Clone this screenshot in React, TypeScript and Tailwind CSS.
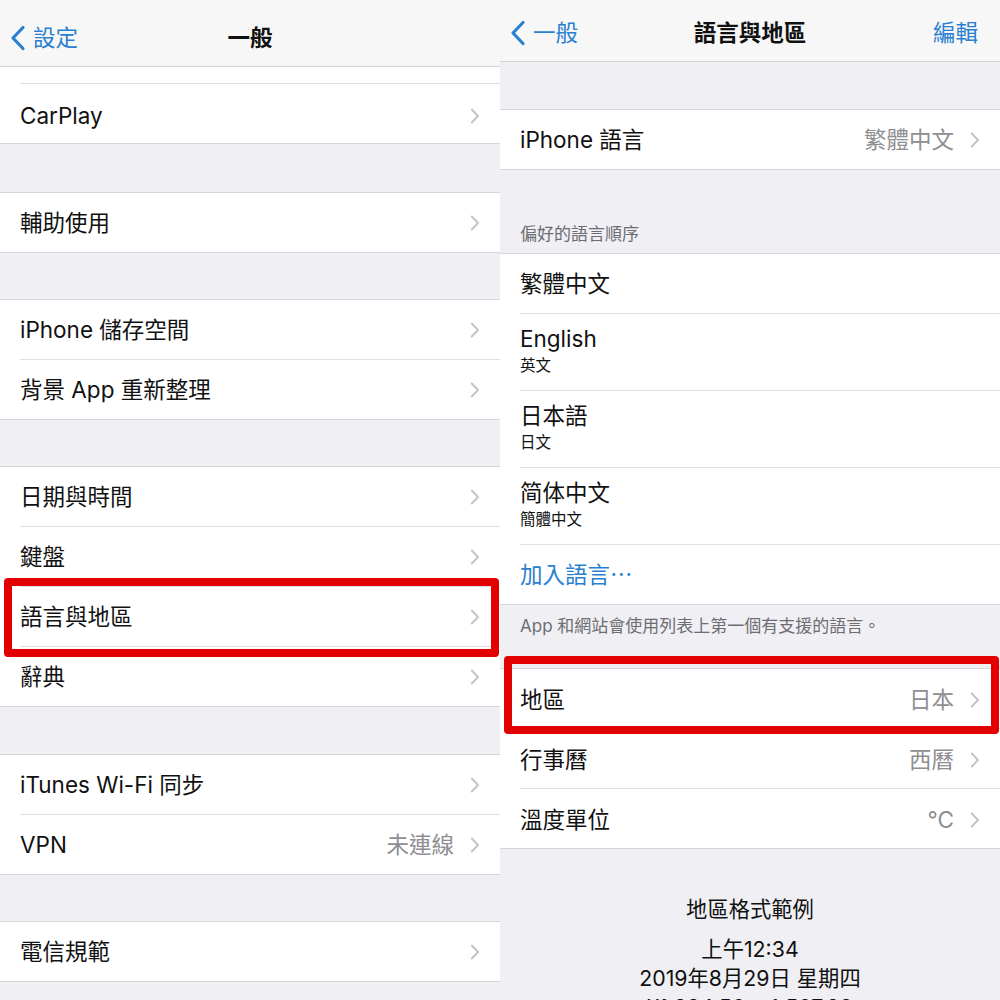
import React from "react";

const Chevron = () => (
  <svg width="10" height="16" viewBox="0 0 10 16" className="shrink-0">
    <path d="M1.8 1.5L8 8l-6.2 6.5" fill="none" stroke="#c4c4c9" strokeWidth="2" strokeLinecap="round" strokeLinejoin="round" />
  </svg>
);

const BackChevron = () => (
  <svg width="16" height="26" viewBox="0 0 16 26" className="shrink-0">
    <path d="M13 2.5L3 13l10 10.5" fill="none" stroke="#2a80d0" strokeWidth="3.2" strokeLinecap="round" strokeLinejoin="round" />
  </svg>
);

const Sep = () => <div className="ml-[20px] h-px bg-[#e0e0e4]" />;

type RowProps = {
  label: React.ReactNode;
  value?: string;
  chevron?: boolean;
  blue?: boolean;
  pt?: string;
  children?: React.ReactNode;
};

function Row({ label, value, chevron = true, blue = false, pt = "", children }: RowProps) {
  return (
    <div className={`relative flex h-[59px] items-center pl-[20px] pr-[20px] bg-white ${pt}`}>
      <div className={`flex-1 text-[22.5px] leading-[28px] ${blue ? "text-[#2a80d0]" : "text-[#111]"}`}>{label}</div>
      {value && <div className="mr-[16px] text-[22.5px] leading-[28px] text-[#8e8e93]">{value}</div>}
      {chevron && <Chevron />}
      {children}
    </div>
  );
}

function LangRow({ title, sub, h }: { title: string; sub: string; h: string }) {
  return (
    <div className={`flex flex-col pl-[20px] pt-[11px] bg-white ${h}`}>
      <div className="text-[22.5px] leading-[28px] text-[#111]">{title}</div>
      <div className="mt-[3px] text-[15.5px] leading-[20px] text-[#111]">{sub}</div>
    </div>
  );
}

const Group = ({ children }: { children: React.ReactNode }) => (
  <div className="border-y border-[#d6d6da] bg-white">{children}</div>
);

const RedBox = ({ cls }: { cls: string }) => (
  <div className={`pointer-events-none absolute z-10 rounded-[4px] border-[8px] border-[#e30000] ${cls}`} />
);

export default function App() {
  return (
    <div className="flex w-[1000px] h-[1000px] overflow-hidden font-['Inter','Noto_Sans_CJK_TC',sans-serif] bg-[#efeff4]">
      {/* Left panel */}
      <div className="flex w-[500px] h-[1000px] flex-col overflow-hidden bg-[#efeff4]">
        <div className="grid h-[67px] shrink-0 grid-cols-[1fr_auto_1fr] items-center border-b border-[#d3d3d7] bg-[#f7f7f7] pt-[9px]">
          <div className="flex items-center gap-[7px] pl-[10px]">
            <BackChevron />
            <span className="text-[22.5px] leading-[28px] text-[#2a80d0]">設定</span>
          </div>
          <div className="text-[22.5px] font-semibold leading-[28px] text-[#111]">一般</div>
          <div />
        </div>
        <div className="border-b border-[#d6d6da] bg-white">
          <div className="h-[16px]" />
          <Sep />
          <Row label="CarPlay" pt="pt-[4px]" />
        </div>
        <div className="h-[48px] shrink-0" />
        <Group>
          <Row label="輔助使用" />
        </Group>
        <div className="h-[46px] shrink-0" />
        <Group>
          <Row label="iPhone 儲存空間" />
          <Sep />
          <Row label="背景 App 重新整理" />
        </Group>
        <div className="h-[46px] shrink-0" />
        <Group>
          <Row label="日期與時間" />
          <Sep />
          <Row label="鍵盤" />
          <Sep />
          <Row label="語言與地區">
            <RedBox cls="top-[-9px] bottom-[-11px] left-[4px] right-[1px]" />
          </Row>
          <Sep />
          <Row label="辭典" />
        </Group>
        <div className="h-[47px] shrink-0" />
        <Group>
          <Row label="iTunes Wi-Fi 同步" />
          <Sep />
          <Row label="VPN" value="未連線" />
        </Group>
        <div className="h-[46px] shrink-0" />
        <Group>
          <Row label="電信規範" />
        </Group>
      </div>

      {/* Right panel */}
      <div className="flex w-[500px] h-[1000px] flex-col overflow-hidden bg-[#efeff4]">
        <div className="grid h-[62px] shrink-0 grid-cols-[1fr_auto_1fr] items-center border-b border-[#d3d3d7] bg-[#f7f7f7] pt-[4px]">
          <div className="flex items-center gap-[7px] pl-[10px]">
            <BackChevron />
            <span className="text-[22.5px] leading-[28px] text-[#2a80d0]">一般</span>
          </div>
          <div className="text-[22.5px] font-semibold leading-[28px] text-[#111]">語言與地區</div>
          <div className="pr-[22px] text-right text-[22.5px] leading-[28px] text-[#2a80d0]">編輯</div>
        </div>
        <div className="h-[47px] shrink-0" />
        <Group>
          <Row label="iPhone 語言" value="繁體中文" />
        </Group>
        <div className="flex h-[83px] shrink-0 items-end pb-[9px] pl-[20px] text-[17px] leading-[20px] text-[#6d6d72]">
          偏好的語言順序
        </div>
        <Group>
          <Row label="繁體中文" chevron={false} />
          <Sep />
          <LangRow title="English" sub="英文" h="h-[76px]" />
          <Sep />
          <LangRow title="日本語" sub="日文" h="h-[76px]" />
          <Sep />
          <LangRow title="简体中文" sub="簡體中文" h="h-[76px]" />
          <Sep />
          <Row label="加入語言⋯" chevron={false} blue />
        </Group>
        <div className="h-[63px] shrink-0 pl-[20px] pt-[11px] text-[17px] leading-[20px] text-[#6d6d72]">
          App 和網站會使用列表上第一個有支援的語言。
        </div>
        <Group>
          <Row label="地區" value="日本" pt="pt-[2px]">
            <RedBox cls="top-[-13px] bottom-[-6px] left-[4px] right-[1px]" />
          </Row>
          <Sep />
          <Row label="行事曆" value="西曆" pt="pt-[2px]" />
          <Sep />
          <Row label="溫度單位" value="°C" pt="pt-[2px]" />
        </Group>
        <div className="flex flex-col items-center pt-[46px] text-[#111]">
          <div className="text-[21.3px] leading-[28px]">地區格式範例</div>
          <div className="mt-[12px] text-[21.3px] leading-[29px]">上午12:34</div>
          <div className="text-[21.3px] leading-[29px]">2019年8月29日 星期四</div>
          <div className="text-[21.3px] leading-[29px]">¥1,234.56　4,567.89</div>
        </div>
      </div>
    </div>
  );
}
